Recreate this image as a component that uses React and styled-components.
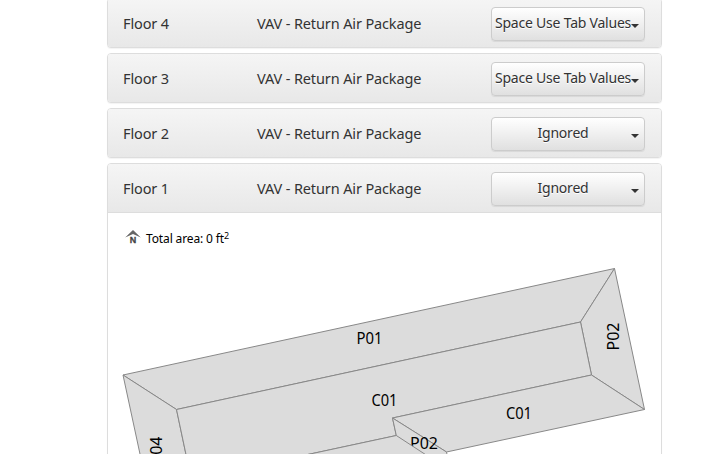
import React from 'react';
import styled, { createGlobalStyle } from 'styled-components';

const GlobalStyle = createGlobalStyle`
  html, body {
    margin: 0;
    background: #fff;
    overflow: hidden;
  }

  * {
    box-sizing: border-box;
  }
`;

const Page = styled.main`
  height: 454px;
  overflow: hidden;
  padding-left: 107px;
  font-family: 'Noto Sans', sans-serif;
  color: #333;
`;

const Accordion = styled.div`
  display: flex;
  flex-direction: column;
  gap: 5px;
  width: 555px;
  margin-top: -2px;
`;

const Panel = styled.section`
  flex: none;
  border: 1px solid #ddd;
  border-radius: 4px;
  background: #fff;
  box-shadow: 0 1px 1px rgba(0, 0, 0, 0.05);
  overflow: hidden;
`;

const PanelHeading = styled.header`
  display: grid;
  grid-template-columns: 134px 234px 154px;
  align-items: center;
  height: ${({ $open }) => ($open ? '49px' : '48px')};
  padding: 1px 0 0 15px;
  background: linear-gradient(to bottom, #f5f5f5, #e8e8e8);
  border-bottom: ${({ $open }) => ($open ? '1px solid #ddd' : 'none')};
`;

const HeadingText = styled.span`
  padding-bottom: 2px;
  font-size: 14.5px;
  line-height: 20px;
  white-space: nowrap;
  letter-spacing: -0.13px;
`;

const DropdownButton = styled.button`
  display: flex;
  align-items: center;
  height: 34px;
  padding: 0 5px 2px 3px;
  border: 1px solid #ccc;
  border-radius: 4px;
  background: linear-gradient(to bottom, #fff, #e0e0e0);
  box-shadow: inset 0 1px 0 rgba(255, 255, 255, 0.15), 0 1px 1px rgba(0, 0, 0, 0.075);
  color: #333;
  font: 14px/20px 'Noto Sans', sans-serif;
  letter-spacing: -0.22px;
  text-shadow: 0 1px 0 #fff;
  white-space: nowrap;
`;

const ButtonLabel = styled.span`
  flex: 1;
  min-width: 0;
  text-align: center;
`;

const Caret = styled.span`
  margin-top: 6px;
  border-top: 4px solid #333;
  border-left: 4px solid transparent;
  border-right: 4px solid transparent;
`;

const AreaLine = styled.div`
  display: flex;
  align-items: center;
  gap: 5px;
  height: 20px;
  margin: 16px 0 0 17px;
  color: #000;
  font-size: 12px;
  line-height: 20px;

  sup {
    font-size: 9px;
    line-height: 0;
    vertical-align: 4px;
  }
`;

const AreaText = styled.span`
  letter-spacing: -0.13px;
`;

const NorthIcon = styled.svg`
  width: 16px;
  height: 14px;
  margin-top: -4px;

  path {
    fill: #666;
  }

  text {
    font: bold 9px 'Liberation Sans', sans-serif;
    text-anchor: middle;
    fill: #444;
    stroke: #444;
    stroke-width: 0.3;
  }
`;

const Plan = styled.svg`
  display: block;
  width: 553px;
  height: 240px;

  polygon {
    fill: #dcdcdc;
    stroke: #888;
    stroke-width: 1;
    stroke-linejoin: round;
  }

  text {
    font-family: 'Noto Sans', sans-serif;
    font-size: 15.5px;
    text-anchor: middle;
    fill: #000;
  }
`;

const floors = [
  { name: 'Floor 4', usage: 'Space Use Tab Values' },
  { name: 'Floor 3', usage: 'Space Use Tab Values' },
  { name: 'Floor 2', usage: 'Ignored' },
  { name: 'Floor 1', usage: 'Ignored', open: true },
];

const FloorPlan = () => (
  <Plan viewBox="108 249 553 240">
    <polygon points="123,375 614.5,268.5 580.5,322 176.5,409.5" />
    <polygon points="614.5,268.5 644.5,409.5 591.5,375 580.5,322" />
    <polygon points="123,375 176.5,409.5 193,488 147.3,488" />
    <polygon points="176.5,409.5 580.5,322 591.5,375 392.5,418 396.3,435.5 191.3,479.5" />
    <polygon points="392.5,418 591.5,375 644.5,409.5 446.5,452" />
    <text x="369.5" y="344" textLength="26" lengthAdjust="spacingAndGlyphs">P01</text>
    <text x="384.5" y="406" textLength="26" lengthAdjust="spacingAndGlyphs">C01</text>
    <text x="519" y="419" textLength="26" lengthAdjust="spacingAndGlyphs">C01</text>
    <text transform="translate(618.5 336.5) rotate(-90)" textLength="28" lengthAdjust="spacingAndGlyphs">P02</text>
    <text transform="translate(162 450.5) rotate(-90)" textLength="28" lengthAdjust="spacingAndGlyphs">P04</text>
    <polygon points="392.5,418 446.5,452 454,488 400,488 396.3,435.5" />
    <text x="424" y="449" textLength="28" lengthAdjust="spacingAndGlyphs">P02</text>
    <polygon points="396.3,435.5 440,464 200,488 191.3,479.5" />
  </Plan>
);

const Floor = ({ name, usage, open }) => (
  <Panel>
    <PanelHeading $open={open}>
      <HeadingText>{name}</HeadingText>
      <HeadingText>VAV - Return Air Package</HeadingText>
      <DropdownButton type="button">
        <ButtonLabel>{usage}</ButtonLabel>
        <Caret />
      </DropdownButton>
    </PanelHeading>
    {open && (
      <>
        <AreaLine>
          <NorthIcon viewBox="0 0 16 14">
            <path d="M8 0 L15.8 7.4 L8 4 L0.2 7.4 Z" />
            <text x="8" y="12.6">N</text>
          </NorthIcon>
          <AreaText>Total area: 0 ft<sup>2</sup></AreaText>
        </AreaLine>
        <FloorPlan />
      </>
    )}
  </Panel>
);

const App = () => (
  <>
    <GlobalStyle />
    <Page>
      <Accordion>
        {floors.map((floor) => (
          <Floor key={floor.name} {...floor} />
        ))}
      </Accordion>
    </Page>
  </>
);

export default App;
